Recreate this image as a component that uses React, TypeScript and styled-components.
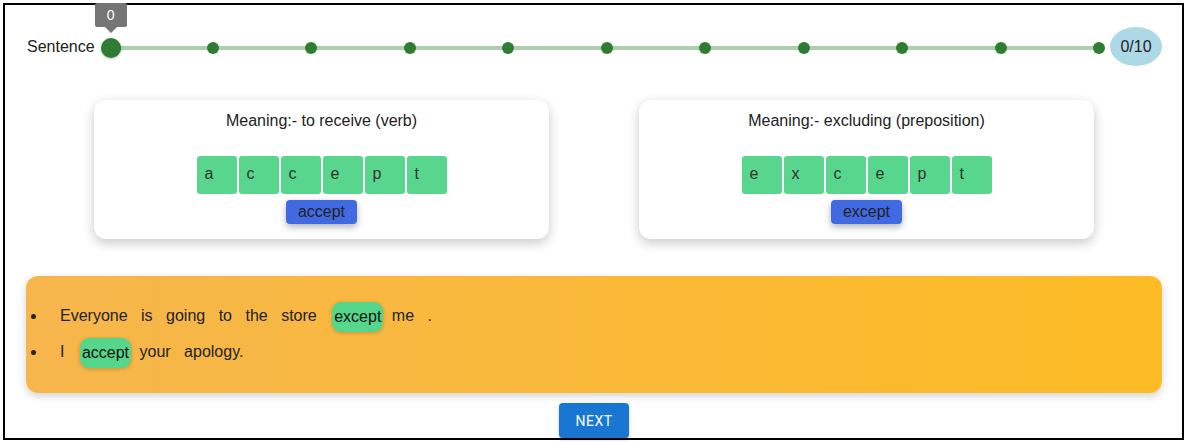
import styled, { createGlobalStyle } from "styled-components";

const GlobalStyle = createGlobalStyle`
  html, body {
    margin: 0;
    padding: 0;
    background: #ffffff;
    font-family: "Liberation Sans", Arial, sans-serif;
    color: #222;
  }
`;

interface WordCard {
  meaning: string;
  word: string;
}

const cards: WordCard[] = [
  { meaning: "to receive (verb)", word: "accept" },
  { meaning: "excluding (preposition)", word: "except" },
];

// each sentence: plain words, and the target word marked with a leading "*"
const sentences: string[][] = [
  ["Everyone", "is", "going", "to", "the", "store", "*except", "me", "."],
  ["I", "*accept", "your", "apology."],
];

const totalSteps = 10;
const currentStep = 0;

export default function App() {
  const marks = Array.from({ length: totalSteps + 1 }, (_, i) => i);

  return (
    <>
      <GlobalStyle />
      <Page>
        <Frame>
          <ProgressRow>
            <ProgressLabel>Sentence</ProgressLabel>
            <SliderWrap>
              <Rail />
              {marks.map((m) => (
                <Mark
                  key={m}
                  style={{ left: `calc(4px + (100% - 4px) * ${m / totalSteps})` }}
                />
              ))}
              <Thumb style={{ left: `${(currentStep / totalSteps) * 100}%` }}>
                <ValueLabel>{currentStep}</ValueLabel>
              </Thumb>
            </SliderWrap>
            <CountBadge>
              {currentStep}/{totalSteps}
            </CountBadge>
          </ProgressRow>

          <CardRow>
            {cards.map((card) => (
              <Card key={card.word}>
                <CardTitle>Meaning:- {card.meaning}</CardTitle>
                <Tiles>
                  {card.word.split("").map((ch, i) => (
                    <Tile key={i}>{ch}</Tile>
                  ))}
                </Tiles>
                <WordButton>{card.word}</WordButton>
              </Card>
            ))}
          </CardRow>

          <SentencePanel>
            <SentenceList>
              {sentences.map((tokens, i) => (
                <SentenceItem key={i}>
                  {tokens.map((t, j) =>
                    t.startsWith("*") ? (
                      <span key={j}>
                        <Chip>{t.slice(1)}</Chip>{" "}
                      </span>
                    ) : (
                      <span key={j}>
                        <Word>{t}</Word>{" "}
                      </span>
                    )
                  )}
                </SentenceItem>
              ))}
            </SentenceList>
          </SentencePanel>

          <NextButton>Next</NextButton>
        </Frame>
      </Page>
    </>
  );
}

const Page = styled.div`
  padding: 3px;
`;

const Frame = styled.div`
  box-sizing: border-box;
  height: 437px;
  border: 2px solid #000;
  padding: 0 20px 0 21px;
  display: flex;
  flex-direction: column;
  align-items: stretch;
`;

const ProgressRow = styled.div`
  display: flex;
  align-items: center;
  height: 39px;
  margin-top: 22px;
`;

const ProgressLabel = styled.div`
  font-size: 16px;
  margin-left: 1px;
  margin-right: 6px;
  color: #222;
`;

const SliderWrap = styled.div`
  position: relative;
  flex: 1;
  height: 20px;
  margin: 2px 10px 0;
`;

const Rail = styled.div`
  position: absolute;
  left: 0;
  right: 0;
  top: 8px;
  height: 4px;
  background: #aecfaf;
`;

const Mark = styled.div`
  position: absolute;
  top: 4px;
  width: 12px;
  height: 12px;
  margin-left: -6px;
  border-radius: 50%;
  background: #2e7d32;
`;

const Thumb = styled.div`
  position: absolute;
  top: 0;
  width: 20px;
  height: 20px;
  margin-left: -10px;
  border-radius: 50%;
  background: #2e7d32;
  box-shadow: 0 1px 3px rgba(0, 0, 0, 0.25);
  z-index: 1;
`;

const ValueLabel = styled.div`
  position: absolute;
  bottom: 31px;
  left: 50%;
  transform: translateX(-50%);
  width: 32px;
  height: 24px;
  border-radius: 2px;
  background: #757575;
  color: #fff;
  font-size: 14px;
  line-height: 24px;
  text-align: center;

  &::after {
    content: "";
    position: absolute;
    top: 24px;
    left: 50%;
    margin-left: -6px;
    border-left: 6px solid transparent;
    border-right: 6px solid transparent;
    border-top: 6px solid #757575;
  }
`;

const CountBadge = styled.div`
  width: 52px;
  height: 39px;
  margin-left: 1px;
  border-radius: 50%;
  background: #add8e6;
  display: flex;
  align-items: center;
  justify-content: center;
  font-size: 16px;
  color: #222;
`;

const CardRow = styled.div`
  display: flex;
  justify-content: center;
  gap: 90px;
  margin-top: 34px;
`;

const Card = styled.div`
  box-sizing: border-box;
  width: 455px;
  height: 139px;
  padding: 12px 0 15px;
  background: #fff;
  border-radius: 12px;
  box-shadow: 0 4px 12px rgba(0, 0, 0, 0.22);
  display: flex;
  flex-direction: column;
  align-items: center;
`;

const CardTitle = styled.div`
  font-size: 16px;
  line-height: 18px;
  color: #222;
`;

const Tiles = styled.div`
  display: flex;
  gap: 2px;
  margin-top: 26px;
`;

const Tile = styled.div`
  box-sizing: border-box;
  width: 40px;
  height: 38px;
  padding-left: 8px;
  border-radius: 3px;
  background: #58d68d;
  font-size: 16px;
  line-height: 36px;
  color: #333;
`;

const WordButton = styled.div`
  margin-top: 6px;
  height: 24px;
  padding: 0 12px;
  border-radius: 4px;
  background: #4169e1;
  color: #222;
  font-size: 16px;
  line-height: 24px;
  box-shadow: 0 3px 7px rgba(0, 0, 0, 0.3);
`;

const SentencePanel = styled.div`
  box-sizing: border-box;
  height: 117px;
  margin-top: 37px;
  padding: 22px 0 0;
  border-radius: 12px;
  background: linear-gradient(90deg, #f6b64c 0%, #fdbc25 100%);
  box-shadow: 0 3px 8px rgba(0, 0, 0, 0.18);
`;

const SentenceList = styled.ul`
  margin: 0;
  padding-left: 21px;
`;

const SentenceItem = styled.li`
  padding-left: 13px;
  line-height: 36px;
  font-size: 16px;
  color: #222;
`;

const Word = styled.span`
  margin-right: 9px;
`;

const Chip = styled.span`
  display: inline-block;
  height: 30px;
  padding: 0 2px;
  margin: 0 4px 0 2px;
  line-height: 30px;
  vertical-align: middle;
  border-radius: 9px;
  background: #55d68b;
  color: #111;
  box-shadow: 0 1px 4px rgba(0, 0, 0, 0.2);
`;

const NextButton = styled.button`
  align-self: center;
  margin-top: 10px;
  height: 35px;
  padding: 0 16px;
  border: none;
  border-radius: 4px;
  background: #1976d2;
  color: #fff;
  font-family: Roboto, "Liberation Sans", sans-serif;
  font-size: 14px;
  font-weight: 400;
  letter-spacing: 0.5px;
  text-transform: uppercase;
  box-shadow: 0 3px 1px -2px rgba(0, 0, 0, 0.2), 0 2px 2px rgba(0, 0, 0, 0.14),
    0 1px 5px rgba(0, 0, 0, 0.12);
  position: relative;
  z-index: 1;
`;
